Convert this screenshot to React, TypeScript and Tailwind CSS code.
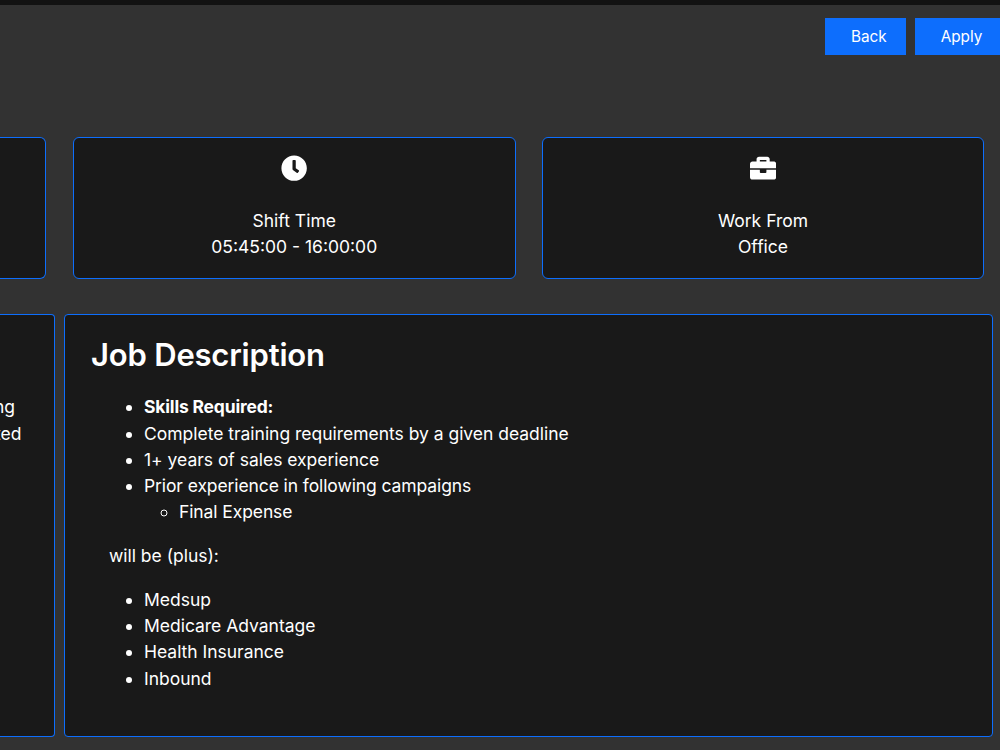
import type { ReactNode } from 'react'
import { FaBriefcase, FaClock } from 'react-icons/fa'

const plusCampaigns = ['Medsup', 'Medicare Advantage', 'Health Insurance', 'Inbound']

function ActionButton({ children }: { children: ReactNode }) {
  return (
    <button
      type="button"
      className="h-[37px] shrink-0 bg-[#0d6efd] pr-[19px] pl-[26px] text-[15.3px] leading-[38px] tracking-[-0.02px] text-white"
    >
      {children}
    </button>
  )
}

function InfoCard({ icon, title, value }: { icon: ReactNode; title: string; value: string }) {
  return (
    <div className="flex h-[141.5px] w-[442.5px] shrink-0 flex-col items-center rounded-[6px] border border-[#0d6efd] bg-[#191919] pt-[17px]">
      <div className="text-[26.25px]">{icon}</div>
      <div className="mt-[26.25px] text-center">
        <p>{title}</p>
        <p>{value}</p>
      </div>
    </div>
  )
}

export default function App() {
  return (
    <div className="h-[750px] w-[1000px] overflow-hidden border-t-[5px] border-[#121212] bg-[#323232] font-['Inter',sans-serif] text-[17.5px] leading-[26.25px] text-white">
      <div className="flex gap-[9px] pt-[13px] pl-[825px]">
        <ActionButton>Back</ActionButton>
        <ActionButton>Apply</ActionButton>
      </div>

      <div className="mt-[82px] flex gap-[26.25px]">
        <div className="mr-[0.75px] h-[141.5px] w-[46px] shrink-0 rounded-r-[6px] border border-l-0 border-[#0d6efd] bg-[#191919]" />
        <InfoCard icon={<FaClock />} title="Shift Time" value="05:45:00 - 16:00:00" />
        <InfoCard icon={<FaBriefcase />} title="Work From" value="Office" />
      </div>

      <div className="mt-[35px] flex gap-[9px]">
        <div className="h-[423.5px] w-[55px] shrink-0 rounded-r-[4px] border border-l-0 border-[#0d6efd] bg-[#191919] pt-[79.75px]">
          <p className="-ml-[6px]">ng</p>
          <p className="-ml-[5px]">ted</p>
        </div>

        <div className="h-[423.5px] w-[929px] shrink-0 rounded-[4px] border border-[#0d6efd] bg-[#191919] px-[26px] pt-[21px]">
          <h2 className="text-[31px] leading-[37px] font-semibold tracking-[-0.2px]">Job Description</h2>
          <div className="mt-[21.75px] pl-[18px] tracking-[-0.02px]">
            <ul className="list-disc pl-[35px]">
              <li className="font-bold tracking-[-0.18px]">Skills Required:</li>
              <li>Complete training requirements by a given deadline</li>
              <li>1+ years of sales experience</li>
              <li className="tracking-[-0.1px]">
                Prior experience in following campaigns
                <ul className="list-[circle] pl-[35px]">
                  <li>Final Expense</li>
                </ul>
              </li>
            </ul>
            <p className="my-[17.5px]">will be (plus):</p>
            <ul className="list-disc pl-[35px]">
              {plusCampaigns.map((name) => (
                <li key={name}>{name}</li>
              ))}
            </ul>
          </div>
        </div>
      </div>
    </div>
  )
}
